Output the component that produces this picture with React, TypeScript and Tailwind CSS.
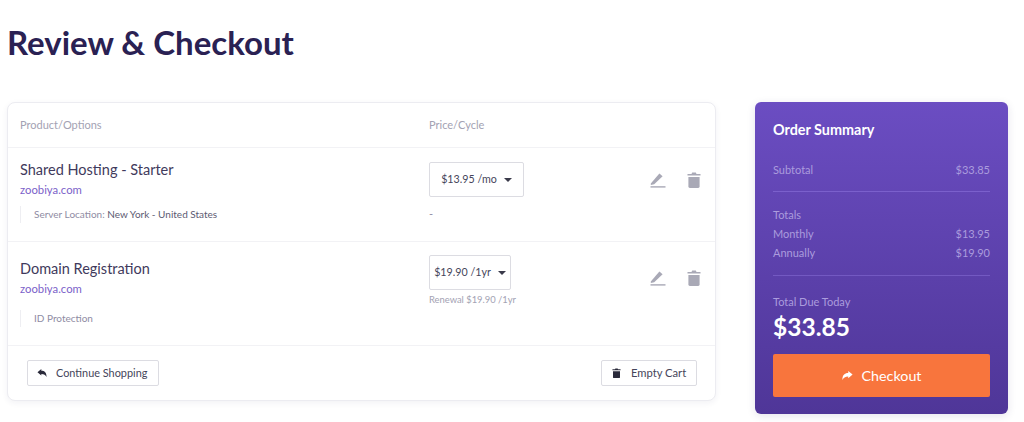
import React from 'react';

const font = "font-['Lato','Noto_Sans',sans-serif]";

const PencilIcon = ({ className }: { className?: string }) => (
  <svg viewBox="0 0 16 16" className={className} fill="currentColor">
    <path d="M0.8 11.6 L9.4 1.6 L12.6 4.2 L4.2 12.2 L0.8 12.9 Z" />
    <rect x="0.5" y="14.2" width="15" height="1.4" />
  </svg>
);

const TrashIcon = ({ className }: { className?: string }) => (
  <svg viewBox="0 0 14 16" className={className} fill="currentColor">
    <path d="M0.5 2 H4.5 L5.2 0.6 H8.8 L9.5 2 H13.5 V3.6 H0.5 Z" />
    <path d="M1.4 5 H12.6 V14.6 Q12.6 16 11.2 16 H2.8 Q1.4 16 1.4 14.6 Z" />
  </svg>
);

const ReplyIcon = ({ className }: { className?: string }) => (
  <svg viewBox="0 0 14 12" className={className} fill="currentColor">
    <path d="M0.2 4.8 L6 0 V2.8 C11 2.8 13.8 5.6 13.8 12 C12.4 9 10 7.4 6 7.4 V9.8 Z" />
  </svg>
);

const ShareIcon = ({ className }: { className?: string }) => (
  <svg viewBox="0 0 14 12" className={className} fill="currentColor">
    <path d="M13.8 4.8 L8 0 V2.8 C3 2.8 0.2 5.6 0.2 12 C1.6 9 4 7.4 8 7.4 V9.8 Z" />
  </svg>
);

const Caret = () => (
  <span className="w-0 h-0 border-l-[4px] border-r-[4px] border-t-[4px] border-l-transparent border-r-transparent border-t-[#3a3a4a]" />
);

const CartRow = ({
  title,
  option,
  price,
  selectClass,
  note,
  rowClass,
  leftClass,
  optionClass,
  actionsClass,
}: {
  title: string;
  option: React.ReactNode;
  price: string;
  selectClass: string;
  note: React.ReactNode;
  rowClass: string;
  leftClass: string;
  optionClass: string;
  actionsClass: string;
}) => (
  <div className={`flex border-b border-[#f2f2f5] ${rowClass}`}>
    <div className={`w-[421px] pl-[12px] ${leftClass}`}>
      <div className="text-[14.5px] leading-[20px] text-[#3f3a5c]">{title}</div>
      <div className="mt-[1px] text-[11.3px] leading-[18px] text-[#7b5fc9]">zoobiya.com</div>
      <div className={`border-l border-[#eeeef2] pl-[13px] text-[10px] leading-[17px] text-[#8f8ca3] ${optionClass}`}>
        {option}
      </div>
    </div>
    <div className="w-[221px]">
      <div className={`h-[35px] flex items-center justify-center gap-[7px] border border-[#dcdce2] rounded-[2px] text-[10.7px] whitespace-nowrap text-[#45455a] ${selectClass}`}>
        <span>{price}</span>
        <Caret />
      </div>
      {note}
    </div>
    <div className={`flex gap-[21px] text-[#a9a9b6] ${actionsClass}`}>
      <PencilIcon className="w-[16px] h-[16px] mt-[1px]" />
      <TrashIcon className="w-[14px] h-[16px] mt-[1px]" />
    </div>
  </div>
);

const App = () => {
  return (
    <div className={`${font} w-[1024px] h-[422px] bg-white overflow-hidden px-[7px] pt-[21px]`}>
      <h1 className="text-[33px] leading-[42px] font-bold text-[#2a2153]">Review &amp; Checkout</h1>

      <div className="mt-[39px] flex items-start gap-[39px]">
        {/* Cart */}
        <div className="w-[709px] h-[299px] bg-white border border-[#ececf1] rounded-[8px] shadow-[0_2px_6px_rgba(40,30,90,0.06)]">
          <div className="flex h-[45px] items-center border-b border-[#f2f2f5] text-[11px] text-[#a3a2b3]">
            <div className="w-[421px] pl-[12px]">Product/Options</div>
            <div>Price/Cycle</div>
          </div>

          <CartRow
            title="Shared Hosting - Starter"
            option={
              <>
                Server Location: <span className="text-[#5c5a72]">New York - United States</span>
              </>
            }
            price="$13.95 /mo"
            selectClass="w-[95px]"
            note={<div className="mt-[8px] text-[11px] leading-[17px] text-[#8f8ca3]">-</div>}
            rowClass="h-[94px] pt-[14px]"
            leftClass="-mt-[2px]"
            optionClass="mt-[7px]"
            actionsClass="pt-[9px]"
          />

          <CartRow
            title="Domain Registration"
            option="ID Protection"
            price="$19.90 /1yr"
            selectClass="w-[82px]"
            note={<div className="mt-[1px] text-[9.4px] leading-[17px] text-[#a3a2b3]">Renewal $19.90 /1yr</div>}
            rowClass="h-[104px] pt-[13px]"
            leftClass="mt-[4px]"
            optionClass="mt-[12px]"
            actionsClass="pt-[14px]"
          />

          <div className="flex items-center justify-between pl-[19px] pr-[18px] pt-[14px]">
            <button className="h-[26px] w-[132px] flex items-center gap-[9px] pl-[9px] border border-[#dcdce2] rounded-[2px] text-[10.9px] whitespace-nowrap text-[#45455a]">
              <ReplyIcon className="w-[10px] h-[8px] text-[#2a2a3a]" />
              Continue Shopping
            </button>
            <button className="h-[26px] w-[96px] flex items-center gap-[10px] pl-[10px] border border-[#dcdce2] rounded-[2px] text-[11.2px] whitespace-nowrap text-[#45455a]">
              <TrashIcon className="w-[9px] h-[10px] text-[#2a2a3a]" />
              Empty Cart
            </button>
          </div>
        </div>

        {/* Summary */}
        <div className="w-[253px] h-[312px] rounded-[6px] bg-gradient-to-b from-[#6b4dc2] to-[#4f3698] shadow-[0_2px_8px_rgba(40,30,90,0.12)] px-[18px] pt-[19px] text-[#ab9cdd]">
          <div className="text-[14.4px] leading-[17px] font-bold text-white">Order Summary</div>

          <div className="mt-[23px] flex justify-between text-[11px] leading-[17px]">
            <span>Subtotal</span>
            <span>$33.85</span>
          </div>
          <div className="mt-[13px] border-t border-[#7b60cc]" />

          <div className="mt-[13px] text-[11px] leading-[19px]">
            <div>Totals</div>
            <div className="flex justify-between">
              <span>Monthly</span>
              <span>$13.95</span>
            </div>
            <div className="flex justify-between">
              <span>Annually</span>
              <span>$19.90</span>
            </div>
          </div>
          <div className="mt-[13px] border-t border-[#7359c2]" />

          <div className="mt-[18px] text-[11px] leading-[15px]">Total Due Today</div>
          <div className="mt-[2px] text-[24.5px] leading-[32px] font-bold text-white">$33.85</div>

          <button className="mt-[11px] w-[217px] h-[43px] flex items-center justify-center gap-[9px] rounded-[2px] bg-[#f8753d] text-[14.3px] text-white">
            <ShareIcon className="w-[11px] h-[9px]" />
            Checkout
          </button>
        </div>
      </div>
    </div>
  );
};

export default App;
